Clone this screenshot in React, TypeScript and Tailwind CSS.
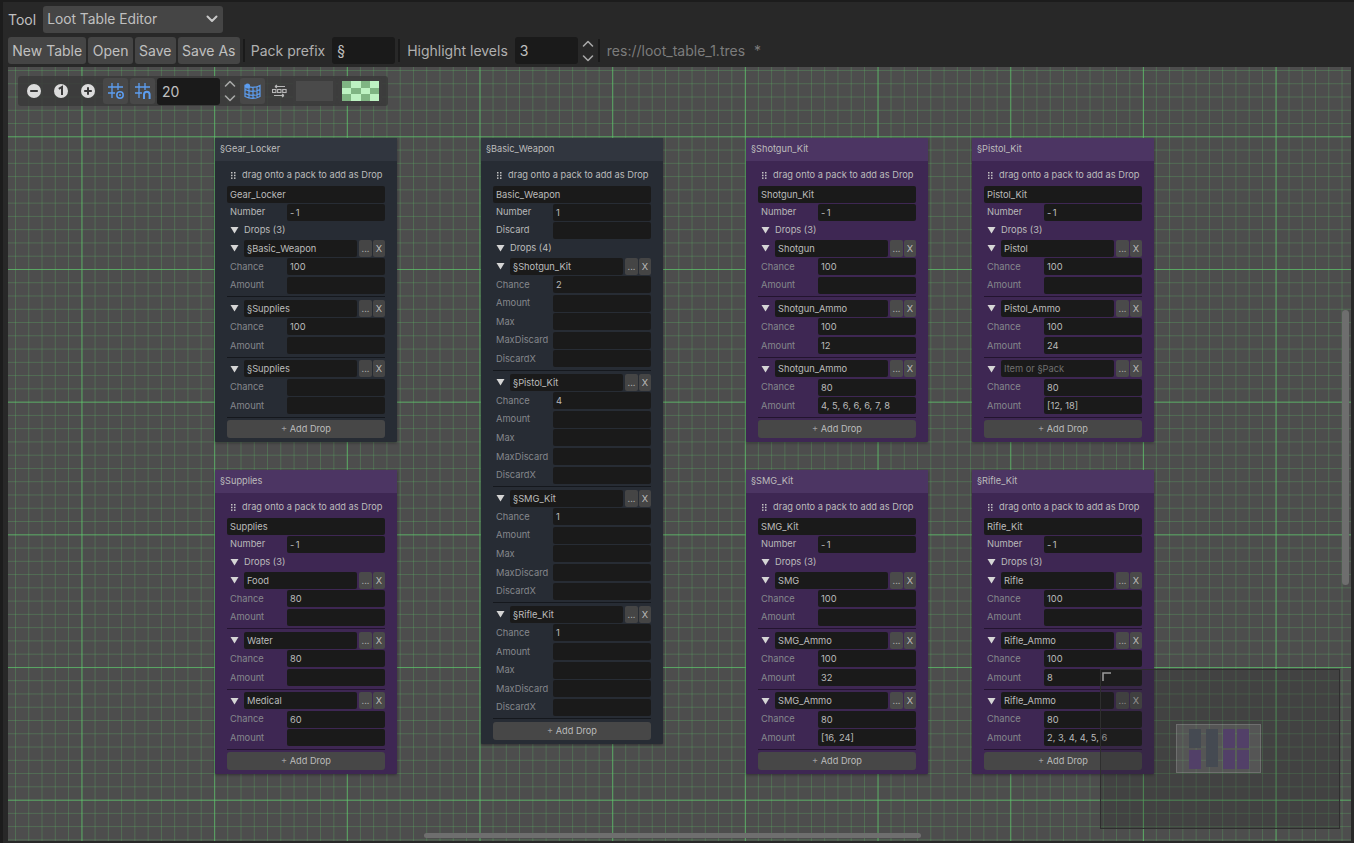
const font = { fontFamily: 'Inter, "Noto Sans", sans-serif' };

type Drop = { name: string; placeholder?: boolean; chance: string; amount: string };
type Pack = {
  title: string;
  name: string;
  number: string;
  purple: boolean;
  left: number;
  top: number;
  drops: Drop[];
};

const d = (name: string, chance = '', amount = ''): Drop => ({ name, chance, amount });

const packs: Pack[] = [
  {
    title: '§Gear_Locker', name: 'Gear_Locker', number: '-1', purple: false, left: 207, top: 71,
    drops: [d('§Basic_Weapon', '100'), d('§Supplies', '100'), d('§Supplies')],
  },
  {
    title: '§Supplies', name: 'Supplies', number: '-1', purple: true, left: 207, top: 403,
    drops: [d('Food', '80'), d('Water', '80'), d('Medical', '60')],
  },
  {
    title: '§Shotgun_Kit', name: 'Shotgun_Kit', number: '-1', purple: true, left: 738, top: 71,
    drops: [d('Shotgun', '100'), d('Shotgun_Ammo', '100', '12'), d('Shotgun_Ammo', '80', '4, 5, 6, 6, 6, 7, 8')],
  },
  {
    title: '§SMG_Kit', name: 'SMG_Kit', number: '-1', purple: true, left: 738, top: 403,
    drops: [d('SMG', '100'), d('SMG_Ammo', '100', '32'), d('SMG_Ammo', '80', '[16, 24]')],
  },
  {
    title: '§Pistol_Kit', name: 'Pistol_Kit', number: '-1', purple: true, left: 964, top: 71,
    drops: [
      d('Pistol', '100'),
      d('Pistol_Ammo', '100', '24'),
      { name: 'Item or §Pack', placeholder: true, chance: '80', amount: '[12, 18]' },
    ],
  },
  {
    title: '§Rifle_Kit', name: 'Rifle_Kit', number: '-1', purple: true, left: 964, top: 403,
    drops: [d('Rifle', '100'), d('Rifle_Ammo', '100', '8'), d('Rifle_Ammo', '80', '2, 3, 4, 4, 5, 6')],
  },
];

const weaponDrops = [
  { name: '§Shotgun_Kit', chance: '2' },
  { name: '§Pistol_Kit', chance: '4' },
  { name: '§SMG_Kit', chance: '1' },
  { name: '§Rifle_Kit', chance: '1' },
];

function Field({ value, className = 'text-[#bcbcbc]' }: { value: string; className?: string }) {
  return (
    <div className={`h-[17px] bg-[#1a1a1a] rounded-[2px] px-[3px] text-[9.3px] leading-[17px] whitespace-pre overflow-hidden ${className}`}>
      {value}
    </div>
  );
}

function Row({ label, value }: { label: string; value: string }) {
  return (
    <div className="flex items-center h-[17px] mb-[1.6px]">
      <span className="w-[60px] shrink-0 pl-[3px] text-[9.3px] whitespace-nowrap text-[#85878c]">{label}</span>
      <Field value={value} className="flex-1 text-[#bcbcbc]" />
    </div>
  );
}

// Number and Discard rows sit a little tighter and have a brighter label
function TopRow({ label, value }: { label: string; value: string }) {
  return (
    <div className="flex items-center h-[17px] mb-[1px]">
      <span className="w-[60px] shrink-0 pl-[3px] text-[9.3px] whitespace-nowrap text-[#b8b8b8]">{label}</span>
      <Field value={value} className="flex-1 text-[#bcbcbc] tracking-[1.4px]" />
    </div>
  );
}

function Triangle() {
  return (
    <svg width="9" height="8" viewBox="0 0 9 8" className="shrink-0">
      <path d="M0.5 1h8L4.5 7.5z" fill="#d6d6d6" />
    </svg>
  );
}

function DropHead({ name, placeholder, purple }: { name: string; placeholder?: boolean; purple: boolean }) {
  return (
    <div className="flex items-center h-[17px] mb-[1.6px]">
      <span className="w-[17px] shrink-0 pl-[3px] flex">
        <Triangle />
      </span>
      <Field value={name} className={`w-[113px] shrink-0 ${placeholder ? 'text-[#6f6f6f]' : 'text-[#bcbcbc]'}`} />
      <div className={`ml-[2px] w-[13px] h-[17px] rounded-[2px] text-center text-[9px] leading-[17px] text-[#a8a8a8] ${purple ? 'bg-[#4a4a4a]' : 'bg-[#454545]'}`}>...</div>
      <div className={`ml-[1px] w-[12px] h-[17px] rounded-[2px] text-center text-[9.3px] leading-[17px] text-[#bcbcbc] ${purple ? 'bg-[#4a4a4a]' : 'bg-[#454545]'}`}>X</div>
    </div>
  );
}

function Divider({ purple }: { purple: boolean }) {
  return <div className={`h-px my-[2.57px] ${purple ? 'bg-[#23142f]' : 'bg-[#15181d]'}`} />;
}

function DragDots() {
  return (
    <svg width="5" height="7" viewBox="0 0 5 7" fill="#c4c4c4" className="shrink-0">
      <rect x="0" y="0" width="1.5" height="1.5" />
      <rect x="3" y="0" width="1.5" height="1.5" />
      <rect x="0" y="2.7" width="1.5" height="1.5" />
      <rect x="3" y="2.7" width="1.5" height="1.5" />
      <rect x="0" y="5.4" width="1.5" height="1.5" />
      <rect x="3" y="5.4" width="1.5" height="1.5" />
    </svg>
  );
}

function CardShell({ title, name, number, purple, left, top, discard, count, children }: {
  title: string; name: string; number: string; purple: boolean; left: number; top: number;
  discard?: boolean; count: number; children: React.ReactNode;
}) {
  return (
    <div
      className={`absolute w-[182px] rounded-[1px] shadow-[0_1px_3px_rgba(0,0,0,0.35)] ${purple ? 'bg-[#3e2753]' : 'bg-[#272c34]'}`}
      style={{ left, top }}
    >
      <div className={`h-[23px] pl-[5px] text-[9.2px] leading-[21px] text-[#bcbcbc] ${purple ? 'bg-[#4c3563]' : 'bg-[#31363f]'}`}>
        {title}
      </div>
      <div className="px-[12px] pt-[5px] pb-[4px]">
        <div className="h-[19.5px] pb-[1.5px] flex items-center pl-[4px] text-[9.25px] text-[#bcbcbc] whitespace-nowrap">
          <DragDots />
          <span className="ml-[6px]">drag onto a pack to add as Drop</span>
        </div>
        <div className="mb-[1px]"><Field value={name} /></div>
        <TopRow label="Number" value={number} />
        {discard && <TopRow label="Discard" value="" />}
        <div className="flex items-center h-[17px] mb-[1px] pl-[3px] text-[9.3px] text-[#bcbcbc]">
          <span className="w-[14px] flex"><Triangle /></span>
          Drops ({count})
        </div>
        {children}
      </div>
    </div>
  );
}

function AddDrop() {
  return (
    <div className="h-[18px] bg-[#474747] rounded-[3px] text-center text-[9.2px] leading-[18px] text-[#bcbcbc]">
      <span className="text-[#a0a0a0]">+</span> Add Drop
    </div>
  );
}

function PackCard({ pack }: { pack: Pack }) {
  return (
    <CardShell {...pack} count={pack.drops.length}>
      {pack.drops.map((drop, i) => (
        <div key={i}>
          <DropHead name={drop.name} placeholder={drop.placeholder} purple={pack.purple} />
          <Row label="Chance" value={drop.chance} />
          <Row label="Amount" value={drop.amount} />
          <Divider purple={pack.purple} />
        </div>
      ))}
      <AddDrop />
    </CardShell>
  );
}

function WeaponCard() {
  return (
    <CardShell title="§Basic_Weapon" name="Basic_Weapon" number="1" purple={false} left={473} top={71} discard count={4}>
      {weaponDrops.map((drop) => (
        <div key={drop.name}>
          <DropHead name={drop.name} purple={false} />
          <Row label="Chance" value={drop.chance} />
          <Row label="Amount" value="" />
          <Row label="Max" value="" />
          <Row label="MaxDiscard" value="" />
          <Row label="DiscardX" value="" />
          <Divider purple={false} />
        </div>
      ))}
      <AddDrop />
    </CardShell>
  );
}

function Chevrons() {
  return (
    <svg width="14" height="26" viewBox="0 0 14 26" fill="none" stroke="#a8a8a8" strokeWidth="1.6" strokeLinecap="round" strokeLinejoin="round">
      <path d="M2.5 8 7 3.5 11.5 8M2.5 18 7 22.5 11.5 18" />
    </svg>
  );
}

function Button({ children }: { children: React.ReactNode }) {
  return <div className="h-[27px] px-[4.3px] bg-[#454545] rounded-[3px] text-[14px] leading-[27px] text-[#c0c0c0]">{children}</div>;
}

function Sep() {
  return <div className="w-[2px] h-[23px] bg-[#1a1a1a]" />;
}

function RoundIcon({ kind }: { kind: 'minus' | 'one' | 'plus' }) {
  return (
    <svg width="14" height="14" viewBox="0 0 14 14">
      <circle cx="7" cy="7" r="7" fill="#dcdcdc" />
      {kind === 'minus' && <path d="M3.2 7h7.6" stroke="#3a3a3a" strokeWidth="2" />}
      {kind === 'plus' && <path d="M3.2 7h7.6M7 3.2v7.6" stroke="#3a3a3a" strokeWidth="2" />}
      {kind === 'one' && <path d="M4.8 4.8 8 3v8" stroke="#3a3a3a" strokeWidth="2" fill="none" />}
    </svg>
  );
}

function GridIcon({ magnet }: { magnet?: boolean }) {
  return (
    <svg width="16" height="16" viewBox="0 0 16 16" fill="none" stroke="#5c9df0" strokeWidth="1.3">
      <path d="M4 0v15M10 0v7M0 4h15M0 10h7" />
      {magnet ? (
        <path d="M9 16v-4.5a2.8 2.8 0 0 1 5.6 0V16" strokeWidth="2" />
      ) : (
        <>
          <circle cx="12" cy="12" r="3.2" strokeWidth="1.5" />
          <circle cx="12" cy="12" r="1" fill="#5c9df0" stroke="none" />
        </>
      )}
    </svg>
  );
}

function MapIcon() {
  return (
    <svg width="17" height="17" viewBox="0 0 17 17" fill="none" stroke="#5c9df0" strokeWidth="1.2">
      <path d="M1 2.5c5 2.5 10 2.5 15 0v11c-5 2.5-10 2.5-15 0zM1 6.5c5 2.5 10 2.5 15 0M1 10.5c5 2.5 10 2.5 15 0M5 4v11M9 4.5V16M13 4v11" />
      <circle cx="3.5" cy="3" r="2.6" fill="#5c9df0" stroke="none" />
    </svg>
  );
}

function ArrangeIcon() {
  return (
    <svg width="15" height="14" viewBox="0 0 15 14" fill="none" stroke="#b8b8b8" strokeWidth="1.1">
      <path d="M3 2.5h10M3 2.5l2-1.5M3 2.5l2 1.5M2 11.5h10M12 11.5l-2-1.5M12 11.5l-2 1.5" />
      <rect x="0.5" y="5.5" width="3.4" height="3" />
      <rect x="5.6" y="5.5" width="3.4" height="3" />
      <rect x="10.7" y="5.5" width="3.4" height="3" />
    </svg>
  );
}

function Checker() {
  const cells = Array.from({ length: 12 }, (_, i) => (i + Math.floor(i / 4)) % 2 === 0);
  return (
    <div className="grid grid-cols-4 grid-rows-3 w-[37px] h-[20px]">
      {cells.map((dark, i) => (
        <div key={i} className={dark ? 'bg-[#7fb583]' : 'bg-[#bdf2c2]'} />
      ))}
    </div>
  );
}

function Minimap() {
  return (
    <div className="absolute left-[1092px] top-[602px] w-[240px] h-[160px] border border-[#2e2e2e] bg-[rgba(40,40,40,0.28)]">
      <svg width="9" height="9" viewBox="0 0 9 9" fill="none" stroke="#9a9a9a" strokeWidth="1.6" className="absolute left-[1px] top-[2px]">
        <path d="M1 9V1h8" />
      </svg>
      <div className="absolute left-[75px] top-[54px] w-[85px] h-[49px] bg-white/10 border border-white/15">
        <div className="flex gap-[5px] pl-[12px] pt-[4px]">
          <div className="flex flex-col gap-[2px]">
            <div className="w-[12px] h-[19px] bg-[#454a52]" />
            <div className="w-[12px] h-[19px] bg-[#524068]" />
          </div>
          <div className="w-[12px] h-[38px] bg-[#454a52]" />
          <div className="flex flex-col gap-[2px]">
            <div className="w-[12px] h-[19px] bg-[#524068]" />
            <div className="w-[12px] h-[19px] bg-[#524068]" />
          </div>
          <div className="flex flex-col gap-[2px] -ml-[3px]">
            <div className="w-[12px] h-[19px] bg-[#524068]" />
            <div className="w-[12px] h-[19px] bg-[#524068]" />
          </div>
        </div>
      </div>
    </div>
  );
}

export default function App() {
  return (
    <div className="w-[1354px] h-[843px] flex flex-col overflow-hidden bg-[#282828] border-t-2 border-l-[3px] border-[#1c1c1c]" style={font}>
      {/* Top bars */}
      <div className="flex items-center h-[32px] pl-[5px] pt-[2px] gap-[7px]">
        <span className="text-[14px] text-[#c0c0c0]">Tool</span>
        <div className="w-[180px] h-[27px] bg-[#454545] rounded-[3px] flex items-center justify-between px-[4px] text-[13.8px] text-[#c0c0c0]">
          Loot Table Editor
          <svg width="12" height="8" viewBox="0 0 12 8" fill="none" stroke="#c8c8c8" strokeWidth="2" strokeLinecap="round" strokeLinejoin="round" className="mr-[1px]">
            <path d="M1.5 1.5 6 6l4.5-4.5" />
          </svg>
        </div>
      </div>
      <div className="flex items-center h-[33px] pl-[5px]">
        <div className="flex gap-[2px]">
          <Button>New Table</Button>
          <Button>Open</Button>
          <Button>Save</Button>
          <Button>Save As</Button>
        </div>
        <div className="ml-[3px]"><Sep /></div>
        <span className="ml-[6px] text-[14px] text-[#b0b0b0]">Pack prefix</span>
        <div className="ml-[7px] w-[63px] h-[27px] bg-[#1a1a1a] rounded-[3px] pl-[5px] text-[14px] leading-[27px] text-[#c0c0c0]">§</div>
        <div className="ml-[3px]"><Sep /></div>
        <span className="ml-[7px] text-[14px] text-[#b0b0b0]">Highlight levels</span>
        <div className="ml-[7px] w-[63px] h-[27px] bg-[#1a1a1a] rounded-[3px] pl-[5px] text-[14px] leading-[27px] text-[#c0c0c0]">3</div>
        <div className="ml-[3px] flex"><Chevrons /></div>
        <div className="ml-[3px]"><Sep /></div>
        <span className="ml-[7px] text-[14px] text-[#7c7c7c]">res://loot_table_1.tres&nbsp;<span className="ml-[5px]">*</span></span>
      </div>

      {/* Graph canvas */}
      <div className="relative flex-1 ml-[5px] mr-[3px] mb-[2px] overflow-hidden bg-[#4d4d4d] bg-[linear-gradient(to_right,rgba(95,205,110,0.6)_1px,transparent_1px),linear-gradient(to_bottom,rgba(95,205,110,0.6)_1px,transparent_1px),linear-gradient(to_right,rgba(95,200,105,0.26)_1px,transparent_1px),linear-gradient(to_bottom,rgba(95,200,105,0.26)_1px,transparent_1px)] bg-[size:132.7px_132.7px,132.7px_132.7px,13.27px_13.27px,13.27px_13.27px] bg-[position:73.5px_69.3px,73.5px_69.3px,7px_3px,7px_3px]">
        <div className="absolute left-[10px] top-[9px] h-[30px] w-[370px] bg-[#3a3a3a]/85 rounded-[3px] flex items-center pl-[9px]">
          <div className="flex gap-[13px]">
            <RoundIcon kind="minus" />
            <RoundIcon kind="one" />
            <RoundIcon kind="plus" />
          </div>
          <div className="ml-[8px] flex gap-[2px]">
            <div className="w-[25px] h-[26px] bg-[#484848] rounded-[3px] flex items-center justify-center"><GridIcon /></div>
            <div className="w-[25px] h-[26px] bg-[#484848] rounded-[3px] flex items-center justify-center"><GridIcon magnet /></div>
          </div>
          <div className="ml-[2px] w-[63px] h-[27px] bg-[#1a1a1a] rounded-[3px] pl-[5px] text-[14px] leading-[27px] text-[#c0c0c0]">20</div>
          <div className="ml-[3px] flex"><Chevrons /></div>
          <div className="ml-[3px] w-[25px] h-[26px] bg-[#484848] rounded-[3px] flex items-center justify-center"><MapIcon /></div>
          <div className="ml-[5px] w-[19px] flex justify-center"><ArrangeIcon /></div>
          <div className="ml-[4px] w-[43px] h-[26px] bg-[#3d3d3d] rounded-[3px] p-[3px]"><div className="w-full h-full bg-[#4a4a4a]" /></div>
          <div className="ml-[2px] w-[44px] h-[26px] bg-[#3d3d3d] rounded-[3px] flex items-center justify-center pl-[1px]"><Checker /></div>
        </div>

        {packs.map((pack) => (
          <PackCard key={pack.title} pack={pack} />
        ))}
        <WeaponCard />
        <Minimap />

        {/* Scrollbars */}
        <div className="absolute left-[1334px] top-[243px] w-[7px] h-[275px] rounded-full bg-[#6e6e6e]" />
        <div className="absolute left-[416px] top-[766px] w-[497px] h-[5px] rounded-full bg-[#6e6e6e]" />
      </div>
    </div>
  );
}
